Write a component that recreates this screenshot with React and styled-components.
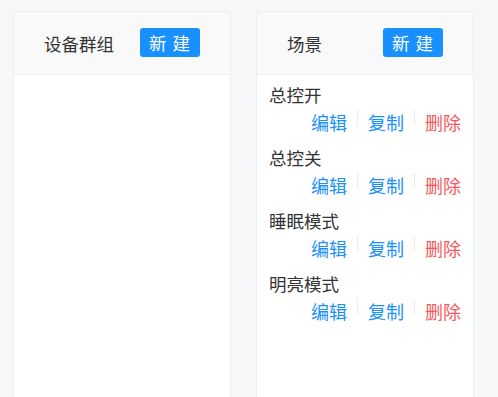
import React from 'react';
import styled, { createGlobalStyle } from 'styled-components';

const GlobalStyle = createGlobalStyle`
  html, body {
    margin: 0;
    padding: 0;
    background: #f6f7f9;
    font-family: "Noto Sans CJK SC", "Noto Sans", sans-serif;
    overflow: hidden;
  }
`;

const Page = styled.div`
  display: flex;
  gap: 25px;
  padding: 11px 13px 0;
  height: 397px;
  box-sizing: border-box;
  overflow: hidden;
`;

const Card = styled.div`
  width: 218px;
  height: 420px;
  flex-shrink: 0;
  box-sizing: border-box;
  background: #fff;
  border: 1px solid #ebeef5;
  border-radius: 2px;
  display: flex;
  flex-direction: column;
`;

const Header = styled.div`
  height: 63px;
  box-sizing: border-box;
  background: #f9f9f9;
  border-bottom: 1px solid #ebeef5;
  display: grid;
  grid-template-columns: 96px auto;
  align-items: center;
  padding: 0 0 2px 30px;
  h2 {
    margin: 0;
    font-size: 17.5px;
    font-weight: 400;
    color: #333;
    padding-top: 3px;
  }
`;

const NewButton = styled.button`
  width: 60px;
  height: 29px;
  padding: 0;
  border: none;
  border-radius: 3px;
  background: #1890ff;
  color: #fff;
  font-family: inherit;
  font-size: 17.5px;
  letter-spacing: 1px;
  line-height: 29px;
  cursor: pointer;
`;

const Body = styled.div`
  flex: 1;
  padding: 7px 12px 0 12px;
`;

const Item = styled.div`
  margin-bottom: 9px;
  .name {
    font-size: 17.5px;
    line-height: 26px;
    color: #333;
  }
`;

const Actions = styled.div`
  display: flex;
  justify-content: flex-end;
  align-items: center;
  height: 28px;
`;

const Action = styled.a`
  font-size: 18px;
  line-height: 28px;
  color: ${p => (p.$danger ? '#f5595c' : '#1890ff')};
  text-decoration: none;
  cursor: pointer;
`;

const Divider = styled.span`
  display: inline-block;
  width: 1px;
  height: 15px;
  margin: 0 10px 10px;
  background: #ebebeb;
`;

const scenes = ['总控开', '总控关', '睡眠模式', '明亮模式'];

export default function App() {
  return (
    <>
      <GlobalStyle />
      <Page>
        <Card>
          <Header>
            <h2>设备群组</h2>
            <NewButton>新 建</NewButton>
          </Header>
          <Body />
        </Card>
        <Card>
          <Header>
            <h2>场景</h2>
            <NewButton>新 建</NewButton>
          </Header>
          <Body>
            {scenes.map(name => (
              <Item key={name}>
                <div className='name'>{name}</div>
                <Actions>
                  <Action>编辑</Action>
                  <Divider />
                  <Action>复制</Action>
                  <Divider />
                  <Action $danger>删除</Action>
                </Actions>
              </Item>
            ))}
          </Body>
        </Card>
      </Page>
    </>
  );
}
